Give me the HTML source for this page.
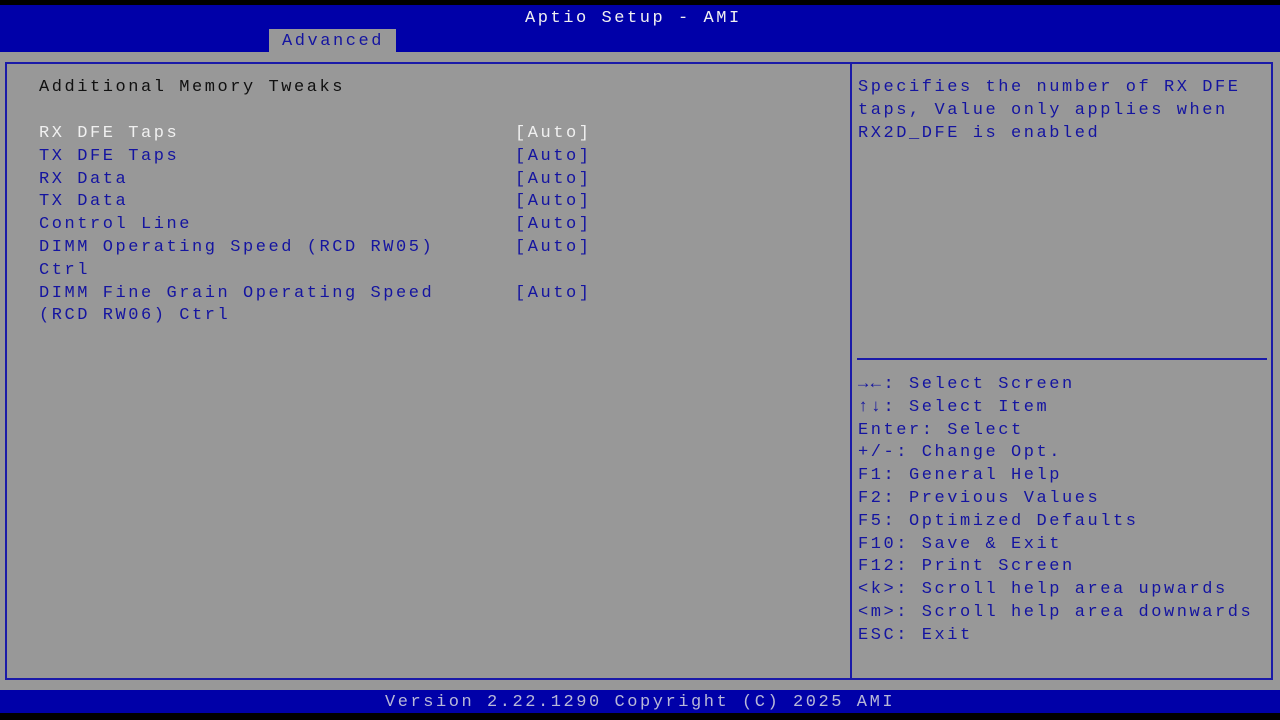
<!DOCTYPE html>
<html><head><style>
*{margin:0;padding:0}
body{width:1280px;height:720px;background:#989898;position:relative;overflow:hidden;font-family:"Liberation Mono",monospace;font-size:17px;letter-spacing:2.55px}
.a{position:absolute;white-space:pre;line-height:22.8px}
.b{color:#1414a0}.w{color:#f0f0f0}.k{color:#101010}
</style></head><body>
<div style="position:absolute;left:0;top:0;width:1280px;height:5px;background:#000"></div>
<div style="position:absolute;left:0;top:5px;width:1280px;height:47px;background:#0000a8"></div>
<div class="a w" style="left:525px;top:8px">Aptio Setup - AMI</div>
<div style="position:absolute;left:269px;top:29px;width:127px;height:23px;background:#989898"></div>
<div class="a b" style="left:282px;top:31px">Advanced</div>
<div style="position:absolute;left:5px;top:62px;width:1264px;height:614px;border:2px solid #1a1aa8"></div>
<div style="position:absolute;left:850px;top:62px;width:2px;height:618px;background:#1a1aa8"></div>
<div style="position:absolute;left:857px;top:358px;width:410px;height:2px;background:#1a1aa8"></div>
<div class="a k" style="left:39px;top:77px">Additional Memory Tweaks</div>
<div class="a b" style="left:39px;top:123px"><span class="w">RX DFE Taps</span>
TX DFE Taps
RX Data
TX Data
Control Line
DIMM Operating Speed (RCD RW05)
Ctrl
DIMM Fine Grain Operating Speed
(RCD RW06) Ctrl</div>
<div class="a b" style="left:515px;top:123px"><span class="w">[Auto]</span>
[Auto]
[Auto]
[Auto]
[Auto]
[Auto]

[Auto]</div>
<div class="a b" style="left:858px;top:77px">Specifies the number of RX DFE
taps, Value only applies when
RX2D_DFE is enabled</div>
<div class="a b" style="left:858px;top:374px"><b>→←</b>: Select Screen
<b>↑↓</b>: Select Item
Enter: Select
+/-: Change Opt.
F1: General Help
F2: Previous Values
F5: Optimized Defaults
F10: Save &amp; Exit
F12: Print Screen
&lt;k&gt;: Scroll help area upwards
&lt;m&gt;: Scroll help area downwards
ESC: Exit</div>
<div style="position:absolute;left:0;top:690px;width:1280px;height:23px;background:#0000a8"></div>
<div style="position:absolute;left:0;top:713px;width:1280px;height:7px;background:#000"></div>
<div class="a" style="left:385px;top:692px;color:#b8b8d8">Version 2.22.1290 Copyright (C) 2025 AMI</div>
</body></html>
